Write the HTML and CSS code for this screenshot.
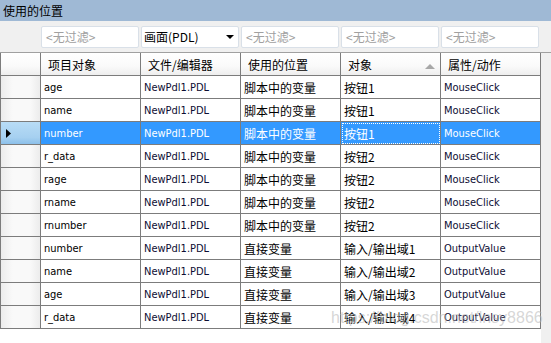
FILE: index.html
```html
<!DOCTYPE html>
<html lang="zh">
<head>
  <meta charset="UTF-8">
  <title>使用的位置</title>
  <link rel="stylesheet" href="styles.css">
</head>
<body>
  <div class="title">使用的位置</div>

  <div class="filters">
    <div class="filter">&lt;无过滤&gt;</div>
    <div class="filter combo"><span>画面(PDL)</span><span class="arrow"></span></div>
    <div class="filter">&lt;无过滤&gt;</div>
    <div class="filter">&lt;无过滤&gt;</div>
    <div class="filter">&lt;无过滤&gt;</div>
  </div>

  <div class="grid-area">
    <div class="grid-wrap">
      <table class="grid">
        <thead>
          <tr>
            <th class="rh"></th>
            <th>项目对象</th>
            <th>文件/编辑器</th>
            <th>使用的位置</th>
            <th class="sorted">对象<span class="sort"></span></th>
            <th>属性/动作</th>
          </tr>
        </thead>
        <tbody>
          <tr>
            <td class="rh"></td><td>age</td><td class="lat">NewPdl1.PDL</td><td class="zh">脚本中的变量</td><td class="zh">按钮1</td><td class="lat">MouseClick</td>
          </tr>
          <tr>
            <td class="rh"></td><td>name</td><td class="lat">NewPdl1.PDL</td><td class="zh">脚本中的变量</td><td class="zh">按钮1</td><td class="lat">MouseClick</td>
          </tr>
          <tr class="selected">
            <td class="rh"><svg class="pointer" width="5" height="9" viewBox="0 0 5 9"><polygon points="0,0 5,4.5 0,9" fill="#000"/></svg></td><td>number</td><td class="lat">NewPdl1.PDL</td><td class="zh">脚本中的变量</td><td class="zh focus">按钮1</td><td class="lat">MouseClick</td>
          </tr>
          <tr>
            <td class="rh"></td><td>r_data</td><td class="lat">NewPdl1.PDL</td><td class="zh">脚本中的变量</td><td class="zh">按钮2</td><td class="lat">MouseClick</td>
          </tr>
          <tr>
            <td class="rh"></td><td>rage</td><td class="lat">NewPdl1.PDL</td><td class="zh">脚本中的变量</td><td class="zh">按钮2</td><td class="lat">MouseClick</td>
          </tr>
          <tr>
            <td class="rh"></td><td>rname</td><td class="lat">NewPdl1.PDL</td><td class="zh">脚本中的变量</td><td class="zh">按钮2</td><td class="lat">MouseClick</td>
          </tr>
          <tr>
            <td class="rh"></td><td>rnumber</td><td class="lat">NewPdl1.PDL</td><td class="zh">脚本中的变量</td><td class="zh">按钮2</td><td class="lat">MouseClick</td>
          </tr>
          <tr>
            <td class="rh"></td><td>number</td><td class="lat">NewPdl1.PDL</td><td class="zh">直接变量</td><td class="zh">输入/输出域1</td><td class="lat">OutputValue</td>
          </tr>
          <tr>
            <td class="rh"></td><td>name</td><td class="lat">NewPdl1.PDL</td><td class="zh">直接变量</td><td class="zh">输入/输出域2</td><td class="lat">OutputValue</td>
          </tr>
          <tr>
            <td class="rh"></td><td>age</td><td class="lat">NewPdl1.PDL</td><td class="zh">直接变量</td><td class="zh">输入/输出域3</td><td class="lat">OutputValue</td>
          </tr>
          <tr>
            <td class="rh"></td><td>r_data</td><td class="lat">NewPdl1.PDL</td><td class="zh">直接变量</td><td class="zh">输入/输出域4</td><td class="lat">OutputValue</td>
          </tr>
        </tbody>
      </table>
      <div class="watermark">https://blog.csdn.net/lnsy8866</div>
    </div>
  </div>
</body>
</html>
```

FILE: styles.css
```css
:root {
  --title-bg: #9fb9d5;
  --panel-bg: #f0f0f0;
  --grid-line: #7c7c7c;
  --select-bg: #3399ff;
  --filter-text: #a0a0a0;
  --latin: "DejaVu Sans Condensed", "DejaVu Sans", "Noto Sans CJK SC", sans-serif;
  --cjk: "Noto Sans CJK SC", "DejaVu Sans", sans-serif;
}

* {
  box-sizing: border-box;
  margin: 0;
  padding: 0;
}

body {
  width: 551px;
  height: 343px;
  overflow: hidden;
  background: var(--panel-bg);
  font-family: var(--latin);
  font-size: 11px;
  color: #000;
  display: flex;
  flex-direction: column;
}

.title {
  height: 21px;
  line-height: 21px;
  padding-left: 3px;
  background: var(--title-bg);
  font-family: var(--cjk);
  font-size: 12px;
}

.filters {
  height: 32px;
  padding: 5px 0 0 41px;
  display: flex;
  gap: 2px;
  border-bottom: 1px solid #a0a0a0;
}

.filter {
  width: 98px;
  height: 22px;
  line-height: 20px;
  padding-left: 4px;
  background: #fff;
  border: 1px solid #d9e0e8;
  border-radius: 2px;
  color: var(--filter-text);
  font-family: var(--cjk);
  font-size: 12px;
}

.filter.combo {
  display: flex;
  align-items: center;
  justify-content: space-between;
  padding: 0 4px 0 2px;
  color: #000;
}

.arrow {
  width: 0;
  height: 0;
  border-top: 4px solid #000;
  border-left: 4px solid transparent;
  border-right: 4px solid transparent;
}

.grid-area {
  flex: 1;
  display: flex;
}

.grid-wrap {
  width: 541px;
  background: #fff;
  position: relative;
}

.grid {
  width: 541px;
  border-collapse: separate;
  border-spacing: 0;
  table-layout: fixed;
}

.grid th,
.grid td {
  width: 100px;
  height: 23px;
  padding: 0 3px;
  border-right: 1px solid var(--grid-line);
  border-bottom: 1px solid var(--grid-line);
  text-align: left;
  font-weight: normal;
  white-space: nowrap;
  overflow: hidden;
}

.grid th {
  padding-left: 7px;
  background: linear-gradient(#ffffff, #fafafa 60%, #eeeeee);
  font-family: var(--cjk);
  font-size: 12px;
}

.grid .rh {
  width: 41px;
  padding: 0;
  border-left: 1px solid var(--grid-line);
}

.grid td.rh {
  background: linear-gradient(to right, #ececec, #f9f9f9 30%, #f9f9f9 75%, #ececec);
}

.grid td.lat {
  color: #0d0d33;
}

.grid td.zh {
  font-family: var(--cjk);
  font-size: 12px;
}

.sort {
  float: right;
  margin: 8px 2px 0 0;
  border-bottom: 5px solid #a8a8a8;
  border-left: 5px solid transparent;
  border-right: 5px solid transparent;
}

.selected td {
  background: var(--select-bg);
  color: #fff;
}

.grid .selected td.lat {
  color: #fff;
}

.grid .selected td.rh {
  background: linear-gradient(#b8dcf6, #a6d0f0 70%, #8cc0ea);
}

.pointer {
  display: block;
  margin-left: 5px;
}

.focus {
  outline: 1px dotted #fff;
  outline-offset: -2px;
}

.watermark {
  position: absolute;
  left: 331px;
  top: 256px;
  font-family: "Liberation Sans", sans-serif;
  font-size: 16px;
  color: rgba(180, 180, 180, 0.55);
  white-space: nowrap;
}
```
